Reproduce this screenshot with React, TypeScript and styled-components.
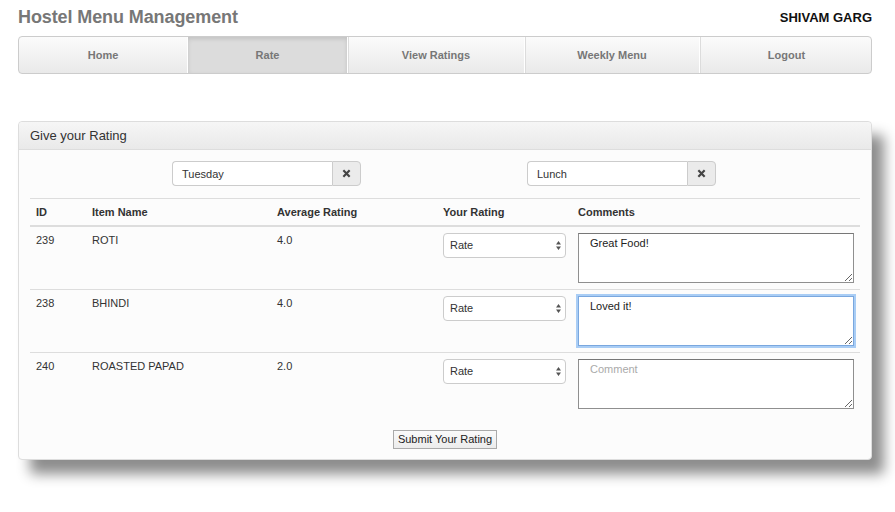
import React, { useEffect, useRef } from "react";
import styled, { createGlobalStyle } from "styled-components";

const Global = createGlobalStyle`
  html, body { margin: 0; padding: 0; background: #fff; }
  body { font-family: "Liberation Sans", Arial, sans-serif; color: #333; }
  * { box-sizing: border-box; }
`;

const Page = styled.div`
  width: 895px;
  min-height: 512px;
  padding: 0 23px 0 18px;
`;

const Header = styled.header`
  display: flex;
  justify-content: space-between;
  align-items: center;
  height: 36px;
  padding-bottom: 1px;
`;

const Title = styled.h1`
  margin: 0;
  font-size: 18px;
  font-weight: bold;
  color: #777;
  letter-spacing: -0.1px;
`;

const User = styled.div`
  font-size: 13px;
  font-weight: bold;
  color: #111;
`;

const Nav = styled.nav`
  display: grid;
  grid-template-columns: 168px 160px 177px 175px 174px;
  height: 38px;
  border: 1px solid #ccc;
  border-radius: 4px;
  background: linear-gradient(#fbfbfb, #e9e9e9);
  overflow: hidden;
`;

const NavItem = styled.a<{ $active?: boolean; $first?: boolean }>`
  display: flex;
  align-items: center;
  justify-content: center;
  font-size: 11px;
  font-weight: bold;
  color: #777;
  text-decoration: none;
  border-left: ${(p) => (p.$first ? "none" : "1px solid #fff")};
  box-shadow: ${(p) => (p.$first ? "none" : "inset 1px 0 0 #dcdcdc")};
  background: ${(p) => (p.$active ? "#dcdcdc" : "transparent")};
  ${(p) => p.$active && "box-shadow: inset 0 2px 4px rgba(0,0,0,0.12);"}
`;

const Panel = styled.section`
  margin-top: 47px;
  border: 1px solid #ddd;
  border-radius: 4px;
  background: #fcfcfc;
  box-shadow: 12px 14px 13px rgba(0, 0, 0, 0.45);
`;

const PanelHeading = styled.div`
  height: 28px;
  display: flex;
  align-items: center;
  padding: 0 11px;
  font-size: 13px;
  color: #333;
  background: linear-gradient(#f6f6f6, #e9e9e9);
  border-bottom: 1px solid #ddd;
  border-radius: 4px 4px 0 0;
`;

const PanelBody = styled.div`
  padding: 11px 11px 10px;
`;

const Filters = styled.div`
  display: flex;
  gap: 166px;
  padding-left: 142px;
  margin-bottom: 12px;
`;

const InputGroup = styled.div`
  display: flex;
  height: 25px;
`;

const FilterInput = styled.div`
  width: 160px;
  height: 25px;
  border: 1px solid #ccc;
  border-right: none;
  border-radius: 4px 0 0 4px;
  background: #fff;
  font-size: 11px;
  color: #333;
  padding: 0 9px;
  display: flex;
  align-items: center;
`;

const ClearButton = styled.button`
  width: 29px;
  height: 25px;
  border: 1px solid #ccc;
  border-radius: 0 4px 4px 0;
  background: #ebebeb;
  color: #444;
  display: flex;
  align-items: center;
  justify-content: center;
  padding: 0;
`;

const Table = styled.table`
  width: 830px;
  border-collapse: collapse;
  table-layout: fixed;
  font-size: 11px;
  color: #333;
`;

const Th = styled.th`
  text-align: left;
  font-weight: bold;
  padding: 6px;
  height: 27px;
  border-top: 1px solid #ddd;
  border-bottom: 2px solid #ddd;
`;

const Row = styled.tr`
  &:last-child td { border-bottom: none; }
`;

const Td = styled.td`
  vertical-align: top;
  padding: 6px;
  line-height: 14px;
  border-bottom: 1px solid #ddd;
`;

const SelectWrap = styled.div`
  position: relative;
  width: 123px;
  height: 25px;
`;

const Select = styled.select`
  appearance: none;
  -webkit-appearance: none;
  width: 100%;
  height: 100%;
  border: 1px solid #ccc;
  border-radius: 4px;
  background: #fff;
  font-family: "Liberation Sans", Arial, sans-serif;
  font-size: 11px;
  color: #333;
  padding: 0 6px;
`;

const Arrows = styled.svg`
  position: absolute;
  right: 5px;
  top: 8px;
  pointer-events: none;
`;

const TextArea = styled.textarea<{ $focused?: boolean }>`
  display: block;
  width: 276px;
  height: 50px;
  border: 1px solid ${(p) => (p.$focused ? "#7aa7de" : "#8f8f8f")};
  border-top-color: ${(p) => (p.$focused ? "#7aa7de" : "#777")};
  box-shadow: ${(p) => (p.$focused ? "0 0 0 2px #a9cdf5" : "none")};
  border-radius: 0;
  background: #fff;
  font-family: "Liberation Sans", Arial, sans-serif;
  font-size: 11px;
  color: #222;
  padding: 3px 11px;
  resize: both;
  outline: none;
  caret-color: #222;
  &::placeholder { color: #aaa; }
`;

const Footer = styled.div`
  display: flex;
  justify-content: center;
  padding-top: 15px;
`;

const Submit = styled.button`
  height: 19px;
  padding: 0 4px;
  font-family: "Liberation Sans", Arial, sans-serif;
  font-size: 11px;
  color: #222;
  border: 1px solid #aaa;
  background: linear-gradient(#fafafa, #ececec);
  border-radius: 0;
`;

const rows = [
  { id: 239, name: "ROTI", avg: "4.0", comment: "Great Food!", focused: false },
  { id: 238, name: "BHINDI", avg: "4.0", comment: "Loved it!", focused: true },
  { id: 240, name: "ROASTED PAPAD", avg: "2.0", comment: "", focused: false },
];

const XIcon = () => (
  <svg width="9" height="9" viewBox="0 0 10 10">
    <path d="M1.5 1.5 L8.5 8.5 M8.5 1.5 L1.5 8.5" stroke="#444" strokeWidth="2.4" />
  </svg>
);

function CommentBox({ value, focused }: { value: string; focused: boolean }) {
  const ref = useRef<HTMLTextAreaElement>(null);
  useEffect(() => {
    if (focused && ref.current) {
      ref.current.focus();
      const n = ref.current.value.length;
      ref.current.setSelectionRange(n, n);
    }
  }, [focused]);
  return <TextArea ref={ref} $focused={focused} defaultValue={value} placeholder="Comment" />;
}

export default function App() {
  return (
    <>
      <Global />
      <Page>
        <Header>
          <Title>Hostel Menu Management</Title>
          <User>SHIVAM GARG</User>
        </Header>
        <Nav>
          <NavItem $first>Home</NavItem>
          <NavItem $active>Rate</NavItem>
          <NavItem>View Ratings</NavItem>
          <NavItem>Weekly Menu</NavItem>
          <NavItem>Logout</NavItem>
        </Nav>
        <Panel>
          <PanelHeading>Give your Rating</PanelHeading>
          <PanelBody>
            <Filters>
              <InputGroup>
                <FilterInput>Tuesday</FilterInput>
                <ClearButton><XIcon /></ClearButton>
              </InputGroup>
              <InputGroup>
                <FilterInput>Lunch</FilterInput>
                <ClearButton><XIcon /></ClearButton>
              </InputGroup>
            </Filters>
            <Table>
              <colgroup>
                <col style={{ width: 56 }} />
                <col style={{ width: 185 }} />
                <col style={{ width: 166 }} />
                <col style={{ width: 135 }} />
                <col style={{ width: 288 }} />
              </colgroup>
              <thead>
                <tr>
                  <Th>ID</Th>
                  <Th>Item Name</Th>
                  <Th>Average Rating</Th>
                  <Th>Your Rating</Th>
                  <Th>Comments</Th>
                </tr>
              </thead>
              <tbody>
                {rows.map((r) => (
                  <Row key={r.id}>
                    <Td>{r.id}</Td>
                    <Td>{r.name}</Td>
                    <Td>{r.avg}</Td>
                    <Td>
                      <SelectWrap>
                        <Select defaultValue="Rate">
                          <option>Rate</option>
                          <option>1</option>
                          <option>2</option>
                          <option>3</option>
                          <option>4</option>
                          <option>5</option>
                        </Select>
                        <Arrows width="5" height="9" viewBox="0 0 5 9">
                          <path d="M2.5 0 L5 3.5 L0 3.5 Z M2.5 9 L5 5.5 L0 5.5 Z" fill="#555" />
                        </Arrows>
                      </SelectWrap>
                    </Td>
                    <Td>
                      <CommentBox value={r.comment} focused={r.focused} />
                    </Td>
                  </Row>
                ))}
              </tbody>
            </Table>
            <Footer>
              <Submit>Submit Your Rating</Submit>
            </Footer>
          </PanelBody>
        </Panel>
      </Page>
    </>
  );
}
